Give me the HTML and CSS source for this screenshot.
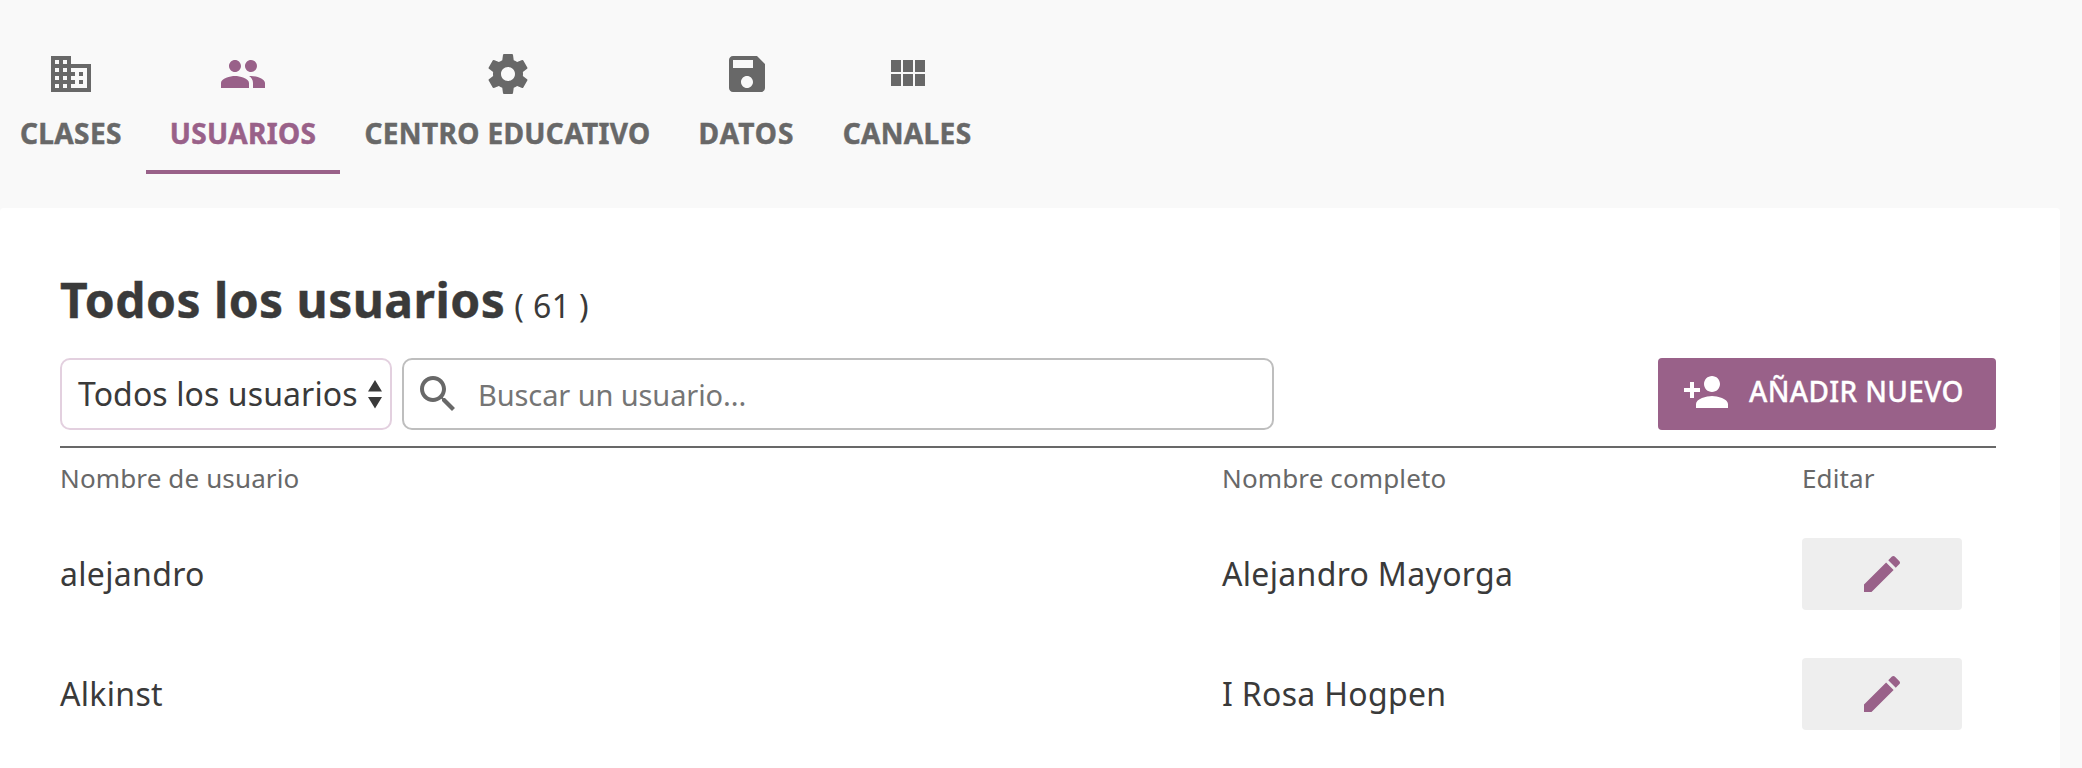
FILE: index.html
```html
<!DOCTYPE html>
<html lang="es">
<head>
<meta charset="utf-8">
<title>Usuarios</title>
<link rel="stylesheet" href="styles.css">
</head>
<body>
<nav class="tabs">
  <a class="tab tab-first"><svg class="icon" viewBox="0 0 24 24"><path d="M12 7V3H2v18h20V7H12zM6 19H4v-2h2v2zm0-4H4v-2h2v2zm0-4H4V9h2v2zm0-4H4V5h2v2zm4 12H8v-2h2v2zm0-4H8v-2h2v2zm0-4H8V9h2v2zm0-4H8V5h2v2zm10 12h-8v-2h2v-2h-2v-2h2v-2h-2V9h8v10zm-2-8h-2v2h2v-2zm0 4h-2v2h2v-2z"/></svg><span>CLASES</span></a>
  <a class="tab tab-active"><svg class="icon" viewBox="0 0 24 24"><path d="M16 11c1.66 0 2.99-1.34 2.99-3S17.66 5 16 5c-1.66 0-3 1.34-3 3s1.34 3 3 3zm-8 0c1.66 0 2.99-1.34 2.99-3S9.66 5 8 5C6.34 5 5 6.34 5 8s1.34 3 3 3zm0 2c-2.33 0-7 1.17-7 3.5V19h14v-2.5c0-2.33-4.67-3.5-7-3.5zm8 0c-.29 0-.62.02-.97.05 1.16.84 1.97 1.97 1.97 3.45V19h6v-2.5c0-2.33-4.67-3.5-7-3.5z"/></svg><span>USUARIOS</span></a>
  <a class="tab"><svg class="icon" viewBox="0 0 24 24"><path d="M19.43 12.98c.04-.32.07-.64.07-.98s-.03-.66-.07-.98l2.11-1.65c.19-.15.24-.42.12-.64l-2-3.46c-.12-.22-.39-.3-.61-.22l-2.49 1c-.52-.4-1.08-.73-1.69-.98l-.38-2.65C14.46 2.18 14.25 2 14 2h-4c-.25 0-.46.18-.49.42l-.38 2.65c-.61.25-1.17.59-1.69.98l-2.49-1c-.23-.09-.49 0-.61.22l-2 3.46c-.13.22-.07.49.12.64l2.11 1.65c-.04.32-.07.65-.07.98s.03.66.07.98l-2.11 1.65c-.19.15-.24.42-.12.64l2 3.46c.12.22.39.3.61.22l2.49-1c.52.4 1.08.73 1.69.98l.38 2.65c.03.24.24.42.49.42h4c.25 0 .46-.18.49-.42l.38-2.65c.61-.25 1.17-.59 1.69-.98l2.49 1c.23.09.49 0 .61-.22l2-3.46c.12-.22.07-.49-.12-.64l-2.11-1.65zM12 15.5c-1.93 0-3.5-1.57-3.5-3.5s1.57-3.5 3.5-3.5 3.5 1.57 3.5 3.5-1.57 3.5-3.5 3.5z"/></svg><span>CENTRO EDUCATIVO</span></a>
  <a class="tab tab-spaced"><svg class="icon" viewBox="0 0 24 24"><path d="M17 3H5c-1.11 0-2 .9-2 2v14c0 1.1.89 2 2 2h14c1.1 0 2-.9 2-2V7l-4-4zm-5 16c-1.66 0-3-1.34-3-3s1.34-3 3-3 3 1.34 3 3-1.34 3-3 3zm3-10H5V5h10v4z"/></svg><span>DATOS</span></a>
  <a class="tab"><svg class="icon" viewBox="0 0 24 24"><path d="M4 11h5V5H4v6zm0 7h5v-6H4v6zm6 0h5v-6h-5v6zm6 0h5v-6h-5v6zm-6-7h5V5h-5v6zm6-6v6h5V5h-5z"/></svg><span>CANALES</span></a>
</nav>
<main class="panel">
  <header class="heading"><h1 class="title">Todos los usuarios</h1><span class="count">( 61 )</span></header>
  <div class="toolbar">
    <div class="select"><span>Todos los usuarios</span><svg class="arrows" viewBox="0 0 14 28"><path d="M0 11.5 7 0l7 11.5zM0 17h14L7 28.5z"/></svg></div>
    <label class="search"><svg class="icon" viewBox="0 0 24 24"><path d="M15.5 14h-.79l-.28-.27C15.41 12.59 16 11.11 16 9.500 16 5.910 13.090 3 9.500 3S3 5.910 3 9.500 5.910 16 9.500 16c1.610 0 3.090-.59 4.230-1.570l.27.28v.79l5 4.990L20.490 19l-4.990-5zm-6 0C7.010 14 5 11.990 5 9.500S7.010 5 9.500 5 14 7.010 14 9.500 11.990 14 9.500 14z"/></svg><input class="search-input" type="text" placeholder="Buscar un usuario..."></label>
    <button class="add"><svg class="icon" viewBox="0 0 24 24"><path d="M15 12c2.210 0 4-1.790 4-4s-1.790-4-4-4-4 1.790-4 4 1.790 4 4 4zm-9-2V7H4v3H1v2h3v3h2v-3h3v-2H6zm9 4c-2.670 0-8 1.340-8 4v2h16v-2c0-2.660-5.330-4-8-4z"/></svg><span>AÑADIR NUEVO</span></button>
  </div>
  <section class="table">
    <div class="row row-head"><span>Nombre de usuario</span><span>Nombre completo</span><span>Editar</span></div>
    <div class="row"><span class="cell">alejandro</span><span class="cell">Alejandro Mayorga</span><button class="edit"><svg class="icon" viewBox="0 0 24 24"><path d="M3 17.250V21h3.750L17.810 9.940l-3.750-3.750L3 17.250zM20.710 7.040c.39-.39.39-1.020 0-1.410l-2.340-2.340c-.39-.39-1.020-.39-1.410 0l-1.830 1.830 3.750 3.750 1.830-1.830z"/></svg></button></div>
    <div class="row"><span class="cell">Alkinst</span><span class="cell">I Rosa Hogpen</span><button class="edit"><svg class="icon" viewBox="0 0 24 24"><path d="M3 17.250V21h3.750L17.810 9.940l-3.750-3.750L3 17.250zM20.710 7.040c.39-.39.39-1.020 0-1.410l-2.340-2.340c-.39-.39-1.020-.39-1.410 0l-1.830 1.830 3.750 3.750 1.830-1.830z"/></svg></button></div>
  </section>
</main>
</body>
</html>
```
FILE: styles.css
```css
* { box-sizing: border-box; }
body {
  margin: 0;
  height: 768px;
  overflow: hidden;
  background: #f9f9f9;
  color: #3a3a3a;
  font-family: "Noto Sans", sans-serif;
  font-size: 32px;
}
.icon { width: 48px; height: 48px; fill: currentColor; display: block; flex: none; }
.tabs { display: flex; height: 208px; padding-top: 50px; }
.tab {
  display: flex;
  flex-direction: column;
  align-items: center;
  height: 124px;
  padding: 0 24px;
  border-bottom: 4px solid transparent;
  color: #686868;
  font-size: 28px;
  font-weight: 750;
  line-height: 40px;
  letter-spacing: 0.37px;
  white-space: nowrap;
}
.tab span { margin-top: 15px; -webkit-text-stroke: 0.5px currentColor; }
.tab-first { padding-left: 20px; }
.tab-active { color: #996189; border-color: #996189; }
.tab-spaced { letter-spacing: 1.1px; }
.panel {
  width: 2060px;
  height: 560px;
  padding: 60px 64px 0 60px;
  background: #fff;
  border-radius: 4px 4px 0 0;
}
.heading { display: flex; align-items: baseline; gap: 9px; height: 90px; line-height: 64px; }
.title { margin: 0; font-size: 48px; font-weight: 700; letter-spacing: 0.44px; -webkit-text-stroke: 0.4px currentColor; }
.count { letter-spacing: 0.4px; }
.toolbar { display: flex; height: 90px; padding-bottom: 16px; border-bottom: 2px solid #686868; }
.select {
  display: flex;
  align-items: center;
  justify-content: space-between;
  width: 332px;
  padding: 0 8px 0 16px;
  border: 2px solid #e3d0df;
  border-radius: 10px;
  letter-spacing: 0.1px;
  white-space: nowrap;
}
.select span { padding-bottom: 2px; }
.arrows { width: 14px; height: 28px; fill: currentColor; overflow: visible; }
.search {
  display: flex;
  align-items: center;
  width: 872px;
  margin-left: 10px;
  padding-left: 10px;
  border: 2px solid #bebebe;
  border-radius: 10px;
  color: #686868;
}
.search-input {
  flex: 1;
  min-width: 0;
  padding: 0;
  margin-left: 16px;
  border: 0;
  background: none;
  font: 400 29px "Noto Sans", sans-serif;
  letter-spacing: -0.1px;
}
.search-input::placeholder { color: #757575; }
.add {
  display: flex;
  align-items: center;
  width: 338px;
  margin-left: auto;
  padding: 0 24px 4px;
  border: 0;
  border-radius: 4px;
  background: #996189;
  color: #fff;
  font: 500 28px "Noto Sans", sans-serif;
  letter-spacing: 0.36px;
  white-space: nowrap;
}
.add span { margin-left: 19px; padding-bottom: 2px; -webkit-text-stroke: 0.3px currentColor; }
.row { display: grid; grid-template-columns: 1162px 580px 160px; align-items: center; height: 120px; }
.row-head { height: 66px; padding-bottom: 6px; color: #686868; font-size: 26px; letter-spacing: 0.13px; }
.cell { padding-bottom: 2px; letter-spacing: 0.32px; }
.edit {
  display: flex;
  align-items: center;
  justify-content: center;
  height: 72px;
  padding: 0;
  border: 0;
  border-radius: 4px;
  background: #eee;
  color: #996189;
}
```
